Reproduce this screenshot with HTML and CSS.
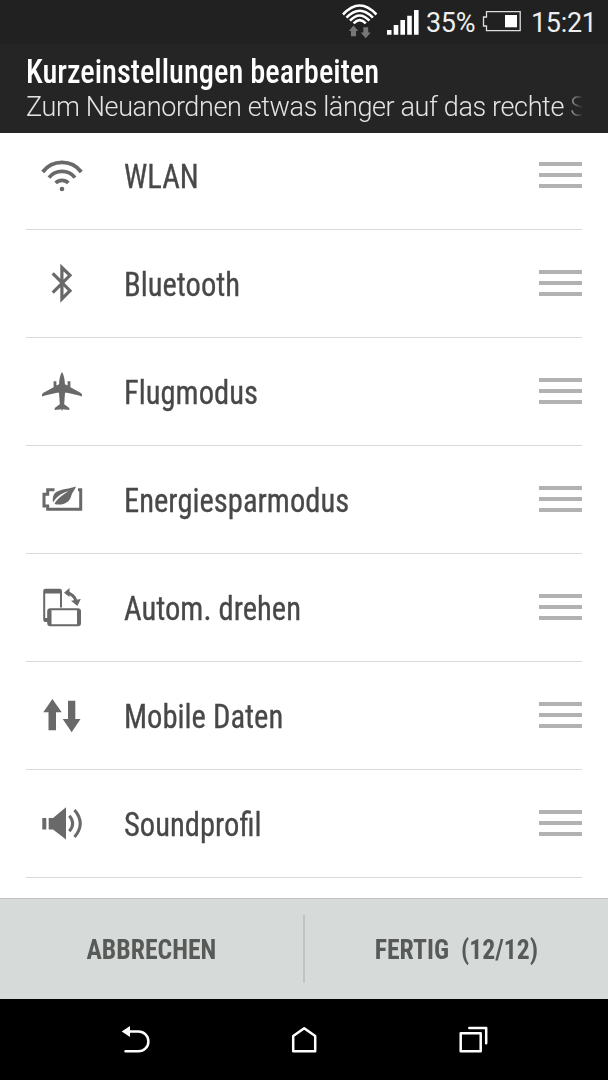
FILE: index.html
```html
<!DOCTYPE html>
<html lang="de">
<head>
<meta charset="utf-8">
<title>Kurzeinstellungen bearbeiten</title>
<link rel="stylesheet" href="styles.css">
</head>
<body>
<div class="screen">
  <div class="status">
    <svg class="st-wifi" width="40" height="40" viewBox="0 0 40 40" fill="none" stroke="#fff" stroke-width="2.6">
      <path d="M3 14.5Q19.700-3.500 36.400 14.500"/><path d="M6.500 17.700Q19.700 3.700 32.900 17.700"/><path d="M10 20.700Q19.700 10.300 29.400 20.700"/><path d="M13.600 23.300Q19.700 17 25.800 23.300"/>
      <path fill="#777" stroke="none" d="M13.500 25.500L18.300 31H16V36.200H11V31H8.800ZM23.300 27.300H28.200V32.500H30.700L25.700 38.200L20.700 32.500H23.300Z"/>
    </svg>
    <svg class="st-signal" width="32" height="40" viewBox="0 0 32 40" fill="#fff">
      <path d="M0 30h4.500v4.800H0zM6.700 25h4.600v9.800H6.700zM13.400 20H18v14.800H13.400zM20.200 15.700h4.600v19.100H20.200zM27 10h4.600v24.800H27z"/>
    </svg>
    <span class="percent">35%</span>
    <svg class="st-batt" width="40" height="40" viewBox="0 0 40 40">
      <path d="M4.500 11.600H38.200V30.600H4.500V26H1.500V17H4.500Z" fill="none" stroke="#ddd" stroke-width="1.300"/><path d="M23 15H35V27.300H23Z" fill="#fff"/>
    </svg>
    <span class="clock">15:21</span>
  </div>
  <header class="header">
    <h1 class="title">Kurzeinstellungen bearbeiten</h1>
    <p class="subtitle">Zum Neuanordnen etwas länger auf das rechte S</p>
  </header>
  <main class="viewport">
    <ul class="list">
      <li class="row">
        <svg class="icon line wifi" viewBox="0 0 44 44"><path d="M2.700 18A24.200 24.200 0 0 1 41.300 18M9 23.600A16.800 16.800 0 0 1 35 23.600M15.700 29A9 9 0 0 1 28.300 29"/><circle class="dot" cx="22" cy="35" r="2.300"/></svg>
        <span class="label">WLAN</span><span class="handle"><i></i><i></i><i></i></span>
      </li>
      <li class="row">
        <svg class="icon line" viewBox="0 0 44 44"><path d="M12.700 11.300L30 28.700L21.900 36.800V5.500L30 13.300L12.700 30.700"/></svg>
        <span class="label">Bluetooth</span><span class="handle"><i></i><i></i><i></i></span>
      </li>
      <li class="row">
        <svg class="icon solid" viewBox="0 0 44 44"><path d="M22 2C23.500 4.300 24.700 8 24.900 14.300L27.600 15.600V11.300H30.400V17.200L40.500 22.800L42 24.300V26.500L39 25.500L27 22.800H25L24.200 34.200L29.300 38V40L24.500 39.400L22.700 39.300L22 41.300L21.300 39.300L19.500 39.400L14.700 40V38L19.800 34.200L19 22.800H17L5 25.500L2 26.500V24.300L3.500 22.800L13.600 17.200V11.300H16.400V15.600L19.100 14.300C19.300 8 20.500 4.300 22 2Z"/></svg>
        <span class="label">Flugmodus</span><span class="handle"><i></i><i></i><i></i></span>
      </li>
      <li class="row">
        <svg class="icon solid" viewBox="0 0 44 44"><path class="mid" d="M14.500 11.800H7.700V16.300H4V28H7.700V31.300H40.700V11.800H38"/><path d="M36 8.500C26 12 16 10.800 13.500 17.500C12.500 20 12.700 22.500 13 24.500C18 16.800 24 14.500 29 12.800C23 17 17.500 20 14.500 26C23 28 29.500 24.500 31 18.500C32 14.500 34.500 12.800 36 8.500Z"/></svg>
        <span class="label">Energiesparmodus</span><span class="handle"><i></i><i></i><i></i></span>
      </li>
      <li class="row">
        <svg class="icon solid" viewBox="0 0 44 44"><path class="thin" d="M8 35H5.500Q4.200 35 4.200 33.500V5Q4.200 3.800 5.500 3.800H19.500Q21 3.800 21 5V21.500"/><path d="M4.500 3.500H20.500V7.500H4.500ZM4 32H8V36H5Z"/><rect class="thin" x="8.200" y="23.200" width="31.800" height="16" rx="2"/><path d="M8 24H11.500V39H8ZM37 24H40V39H37Z"/><path class="mid" d="M27 6.700Q34 8.200 36 15"/><path d="M24 6.700L29.500 2V11ZM31 14.800L40.800 13L37.400 20Z"/></svg>
        <span class="label">Autom. drehen</span><span class="handle"><i></i><i></i><i></i></span>
      </li>
      <li class="row">
        <svg class="icon solid" viewBox="0 0 44 44"><path d="M12.400 5L21.700 18.300H16V36.300H8.500V18.300H3.300ZM28 6.700H35.300V25H40.500L31.700 38.300L22.700 25H28Z"/></svg>
        <span class="label">Mobile Daten</span><span class="handle"><i></i><i></i><i></i></span>
      </li>
      <li class="row">
        <svg class="icon solid" viewBox="0 0 44 44"><path d="M2.300 16H6.300V27.500H2.300ZM8.700 16H13L26 5.300V37.500L13 27.500H8.700Z"/><path class="mid" d="M29.300 13.800Q36 21.500 29.300 29.300M34.500 8Q46 21.500 34.500 35"/></svg>
        <span class="label">Soundprofil</span><span class="handle"><i></i><i></i><i></i></span>
      </li>
    </ul>
  </main>
  <footer class="actions">
    <button class="action"><span>ABBRECHEN</span></button>
    <button class="action"><span>FERTIG&nbsp; (12/12)</span></button>
  </footer>
  <nav class="nav">
    <svg width="32" height="32" viewBox="0 0 32 32"><path d="M9 7.500H18.500A9.900 9.900 0 0 1 18.500 27.300H5.500"/><path d="M1.700 7.500L10 2V13Z" fill="#fff" stroke="none"/></svg>
    <svg width="32" height="32" viewBox="0 0 32 32"><path d="M5.200 27.200V12L16.200 4.200L27.200 12V27.200Z"/></svg>
    <svg width="32" height="32" viewBox="0 0 32 32"><path d="M4.700 9.200H24.700V27.200H4.700ZM13.300 4H30.200V19.300"/></svg>
  </nav>
</div>
</body>
</html>
```
FILE: styles.css
```css
* { box-sizing: border-box; }
body { margin: 0; background: #000; font-family: "Roboto", sans-serif; }
.screen { width: 608px; height: 1080px; display: flex; flex-direction: column; overflow: hidden; }
.status { height: 44px; flex: none; background: #212121; color: #eee; display: flex; align-items: flex-start; padding-left: 340px; font-size: 27px; line-height: 46px; white-space: nowrap; }
.status svg { flex: none; }
.st-signal { margin-left: 7px; }
.percent { width: 55px; padding-left: 7px; letter-spacing: -0.3px; }
.st-batt { margin-left: 8px; }
.clock { margin-left: 9px; letter-spacing: -0.3px; }
.header { height: 89px; flex: none; background: #252525; color: #fff; padding: 7px 26px 0; }
.title { margin: 0; font-family: "Roboto Condensed", "Roboto", sans-serif; font-stretch: 75%; font-size: 33px; font-weight: 500; line-height: 42px; white-space: nowrap; transform: scaleX(0.922); transform-origin: left; }
.subtitle { margin: -3px 0 0; font-size: 27px; font-weight: 300; letter-spacing: -0.38px; line-height: 34px; color: #e4e4e4; white-space: nowrap; -webkit-mask-image: linear-gradient(to right, #000 537px, transparent 557px); mask-image: linear-gradient(to right, #000 537px, transparent 557px); }
.viewport { height: 765px; flex: none; background: #fff; overflow: hidden; }
.list { list-style: none; margin: -11px 26px 0; padding: 0; }
.row { height: 108px; display: flex; align-items: center; border-bottom: 1px solid #dadada; padding-left: 14px; }
.icon { width: 44px; height: 44px; flex: none; }
.line { fill: none; stroke: #696969; stroke-width: 3.2; }
.wifi { stroke-width: 3.8; }
.dot { fill: #696969; stroke: none; }
.solid { fill: #696969; stroke: none; }
.mid { fill: none; stroke: #696969; stroke-width: 3; }
.thin { fill: none; stroke: #696969; stroke-width: 2; }
.label { flex: 1; margin-left: 40px; padding-top: 2px; font-family: "Roboto Condensed", "Roboto", sans-serif; font-stretch: 75%; font-size: 33px; line-height: 40px; color: #484848; -webkit-text-stroke: 0.3px #484848; white-space: nowrap; transform: scaleX(0.927); transform-origin: left; }
.handle { width: 43px; height: 26px; display: flex; flex-direction: column; justify-content: space-between; margin-top: -1px; }
.handle i { height: 4px; background: #b2b2b2; }
.actions { height: 101px; flex: none; display: flex; background: #d6dad8; border-top: 1px solid #bfc2c1; align-items: center; }
.action { flex: 1; height: 68px; padding: 1px 0 0; border: 0; background: none; font-family: "Roboto Condensed", "Roboto", sans-serif; font-stretch: 75%; font-size: 27.5px; font-weight: 700; color: #585a58; }
.action span { display: inline-block; transform: scaleX(0.935); }
.action + .action { border-left: 2px solid #c1c4c3; margin-left: -1px; }
.nav { flex: 1; background: #000; display: flex; align-items: center; justify-content: space-between; padding: 0 120px; }
.nav svg { fill: none; stroke: #fff; stroke-width: 2.5; stroke-linejoin: round; stroke-linecap: round; }
```
